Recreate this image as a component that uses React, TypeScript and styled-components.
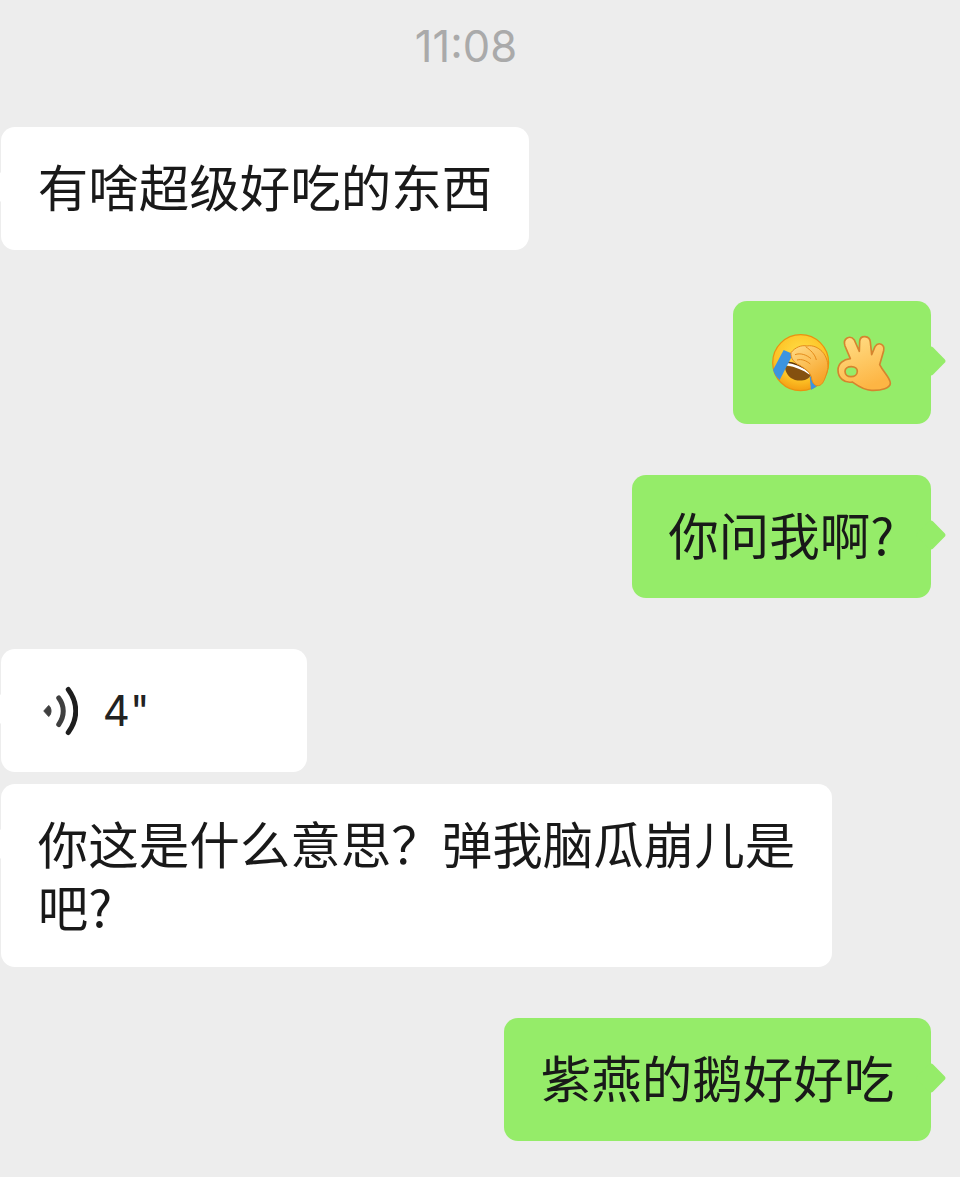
import { createGlobalStyle, styled } from "styled-components";

const GlobalStyle = createGlobalStyle`
    html, body {
        margin: 0;
        padding: 0;
        background-color: #ededed;
        overflow: hidden;
    }
`;

const Chat = styled.main`
    box-sizing: border-box;
    height: 1177px;
    padding: 16px 29px 0 1px;
    display: flex;
    flex-direction: column;
    gap: 51px;
    font-family: "Noto Sans CJK SC", "Liberation Sans", sans-serif;
`;

const Time = styled.div`
    font-family: Inter, "Liberation Sans", sans-serif;
    font-size: 43.5px;
    line-height: 60px;
    color: #aaaaaa;
    text-align: center;
`;

const Group = styled.div`
    display: flex;
    flex-direction: column;
    gap: 12px;
`;

const Row = styled.div<{ $mine?: boolean }>`
    display: flex;
    justify-content: ${(props) => (props.$mine ? "flex-end" : "flex-start")};
`;

const Bubble = styled.div<{ $mine?: boolean; $wrapped?: boolean }>`
    position: relative;
    box-sizing: border-box;
    max-width: 831px;
    padding: 30px 36.75px ${(props) => (props.$wrapped ? "27px" : "30px")};
    border-radius: 14px;
    font-size: 50.5px;
    line-height: 63px;
    color: #191919;
    background-color: ${(props) => (props.$mine ? "#95ec69" : "#ffffff")};

    &::after {
        content: "";
        position: absolute;
        top: 49px;
        ${(props) => (props.$mine ? "right: -11px;" : "left: -11px;")}
        width: 22px;
        height: 22px;
        border-radius: 3px;
        background-color: inherit;
        transform: rotate(45deg);
    }
`;

const Text = styled.span`
    position: relative;
    top: -3px;
    z-index: 1;
`;

const EmojiLine = styled.div`
    display: flex;
    align-items: center;
    gap: 5px;
    height: 63px;
`;

const FaceIcon = styled.svg`
    display: block;
    width: 60px;
    height: 60px;
`;

const HandIcon = styled.svg`
    display: block;
    width: 59.5px;
    height: 60px;
`;

const VoiceLine = styled.div`
    display: flex;
    align-items: center;
    width: 232.5px;
    height: 63px;
    gap: 25px;
`;

const VoiceIcon = styled.svg`
    display: block;
    flex: none;
    width: 40px;
    height: 50px;
`;

const Seconds = styled.span`
    font-family: Inter, "Liberation Sans", sans-serif;
    font-size: 42px;
    line-height: 60px;
    color: #222222;
`;

function Face() {
    return (
        <FaceIcon viewBox="15 15 180 180">
            <defs>
                <radialGradient id="faceFill" cx="50%" cy="35%" r="70%">
                    <stop offset="0%" stopColor="#ffdf48" />
                    <stop offset="65%" stopColor="#fdc326" />
                    <stop offset="100%" stopColor="#f2950f" />
                </radialGradient>
                <linearGradient id="palmFill" x1="0" y1="0" x2="0.6" y2="1">
                    <stop offset="0%" stopColor="#ffdc88" />
                    <stop offset="100%" stopColor="#f7a428" />
                </linearGradient>
            </defs>
            <circle cx="107" cy="104" r="84" fill="url(#faceFill)" stroke="#ec9010" strokeWidth="3.500" />
            <path d="M60 114C84 112 118 122 138 140C130 158 108 160 90 156C72 150 60 134 60 114Z" fill="#84500f" />
            <path d="M64 103C88 106 114 116 134 134L134 140C114 126 88 116 64 112Z" fill="#ffffff" />
            <path d="M62 102C86 104 112 114 134 132" fill="none" stroke="#5e350a" strokeWidth="4" />
            <path d="M56 66L84 78L44 156C34 148 28 138 24 126Z" fill="#3c94e0" />
            <path d="M134 146L152 140L158 172C152 178 144 183 138 185Z" fill="#3c94e0" />
            <path
                d="M78 74C90 58 110 50 126 54C144 50 164 60 176 76C188 94 192 114 186 132C180 152 174 172 160 173C147 175 140 160 139 146C133 130 120 122 104 112C88 106 76 90 78 74Z"
                fill="url(#palmFill)"
                stroke="#e58c1a"
                strokeWidth="3"
            />
            <path d="M90 80C106 74 124 80 138 92M96 96C110 92 124 98 136 108M122 56C136 66 150 78 154 96" fill="none" stroke="#e58c1a" strokeWidth="3" />
        </FaceIcon>
    );
}

function OkHand() {
    return (
        <HandIcon viewBox="210 15 178.500 180">
            <defs>
                <linearGradient id="okFill" x1="0" y1="0" x2="0.4" y2="1">
                    <stop offset="0%" stopColor="#ffe08a" />
                    <stop offset="100%" stopColor="#fdb544" />
                </linearGradient>
            </defs>
            <path
                fillRule="evenodd"
                d="M219 126C219 106 236 94 256 92L240 54C232 30 256 20 268 36L283 70L284 40C286 20 314 22 316 42L320 80L330 56C340 40 360 48 356 68L344 110C356 134 376 150 376 166C376 180 350 188 320 187C296 187 276 172 262 162C238 166 219 150 219 126ZM259 116C270 116 277 122 277 130C277 140 268 146 258 146C248 146 240 140 240 130C240 122 248 116 259 116Z"
                fill="url(#okFill)"
                stroke="#d5842e"
                strokeWidth="5"
                strokeLinejoin="round"
            />
        </HandIcon>
    );
}

function Voice() {
    return (
        <VoiceIcon viewBox="-2.250 0 40 50">
            <path d="M3.500 25L8.500 19.500C11.500 22.500 11.500 27.500 8.500 30.500Z" fill="#3f3f3f" stroke="#3f3f3f" strokeWidth="1" strokeLinejoin="round" />
            <path d="M18.500 12C24.500 20 24.500 30 18.500 38.500" fill="none" stroke="#3f3f3f" strokeWidth="5" strokeLinecap="round" />
            <path d="M28 3.500C38 17 38 33 28 46.500" fill="none" stroke="#1e1e1e" strokeWidth="5" strokeLinecap="round" />
        </VoiceIcon>
    );
}

export default function App() {
    return (
        <Chat>
            <GlobalStyle />
            <Time>11:08</Time>
            <Row>
                <Bubble>
                    <Text>有啥超级好吃的东西</Text>
                </Bubble>
            </Row>
            <Row $mine>
                <Bubble $mine>
                    <EmojiLine>
                        <Face />
                        <OkHand />
                    </EmojiLine>
                </Bubble>
            </Row>
            <Row $mine>
                <Bubble $mine>
                    <Text>你问我啊?</Text>
                </Bubble>
            </Row>
            <Group>
                <Row>
                    <Bubble>
                        <VoiceLine>
                            <Voice />
                            <Seconds>4"</Seconds>
                        </VoiceLine>
                    </Bubble>
                </Row>
                <Row>
                    <Bubble $wrapped>
                        <Text>你这是什么意思？弹我脑瓜崩儿是吧?</Text>
                    </Bubble>
                </Row>
            </Group>
            <Row $mine>
                <Bubble $mine>
                    <Text>紫燕的鹅好好吃</Text>
                </Bubble>
            </Row>
        </Chat>
    );
}
